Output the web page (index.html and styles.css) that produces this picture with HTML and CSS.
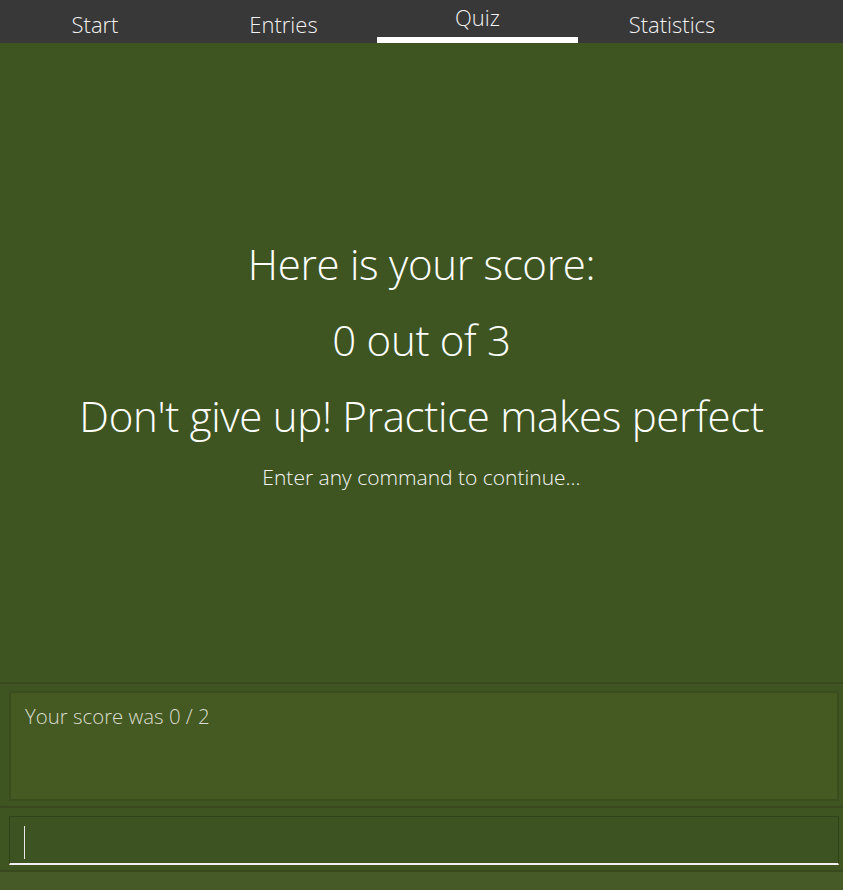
FILE: index.html
```html
<!DOCTYPE html>
<html>
<head>
<meta charset="utf-8">
<link rel="stylesheet" href="styles.css">
</head>
<body>
<div class="app">
  <nav class="tabs">
    <div class="tab t1">Start</div>
    <div class="tab t2">Entries</div>
    <div class="tab t3 active">Quiz</div>
    <div class="tab t4">Statistics</div>
  </nav>
  <main class="main">
    <div class="big">Here is your score:</div>
    <div class="big">0 out of 3</div>
    <div class="big">Don't give up! Practice makes perfect</div>
    <div class="small">Enter any command to continue...</div>
  </main>
  <section class="result-wrap">
    <div class="result">Your score was 0 / 2</div>
  </section>
  <section class="input-wrap">
    <div class="input"><span class="caret"></span></div>
  </section>
  <div class="footer"></div>
</div>
</body>
</html>
```
FILE: styles.css
```css
html, body {
  margin: 0;
  padding: 0;
  background: #3e5522;
}
body {
  width: 843px;
  height: 890px;
  overflow: hidden;
  font-family: "Open Sans", "Noto Sans", sans-serif;
  font-weight: 300;
  color: #ffffff;
}
.app {
  display: flex;
  flex-direction: column;
  height: 890px;
}
.tabs {
  height: 43px;
  background: #383838;
  display: flex;
  flex-shrink: 0;
}
.tab {
  font-size: 22px;
  color: #f2f2f2;
  text-align: center;
  padding-top: 9px;
  box-sizing: border-box;
  height: 43px;
  line-height: 30px;
}
.t1 { width: 190px; }
.t2 { width: 187px; }
.t3 { width: 201px; }
.t4 { width: 188px; }
.tab.active {
  padding-top: 2px;
  border-bottom: 6px solid #ffffff;
}
.main {
  height: 641px;
  flex-shrink: 0;
  background: #3e5522;
  display: flex;
  flex-direction: column;
  align-items: center;
  padding-top: 183px;
  box-sizing: border-box;
  border-bottom: 2px solid #37491d;
}
.big {
  font-size: 42px;
  line-height: 76px;
  height: 76px;
  letter-spacing: -0.3px;
}
.small {
  font-size: 21px;
  line-height: 30px;
  margin-top: 8px;
  color: #f5f5f5;
}
.result-wrap {
  background: #3e5522;
  padding: 7px 4px 5px 9px;
  height: 124px;
  box-sizing: border-box;
  flex-shrink: 0;
  border-bottom: 2px solid #37491d;
}
.result {
  height: 110px;
  box-sizing: border-box;
  background: #445a22;
  border: 2px solid #3a4e1d;
  padding: 10px 14px;
  font-size: 20.4px;
  line-height: 27px;
  color: #dcdcd0;
}
.input-wrap {
  background: #3e5522;
  padding: 8px 4px 5px 9px;
  height: 64px;
  box-sizing: border-box;
  flex-shrink: 0;
  border-bottom: 2px solid #37491d;
}
.input {
  height: 49px;
  box-sizing: border-box;
  background: #3d5321;
  border: 1px solid #2f4219;
  border-bottom: 2px solid #f0f0f0;
  padding: 9px 14px;
}
.caret {
  display: block;
  width: 1px;
  height: 33px;
  background: #e8e8e8;
}
.footer {
  flex: 1;
  background: #455a27;
}
```
